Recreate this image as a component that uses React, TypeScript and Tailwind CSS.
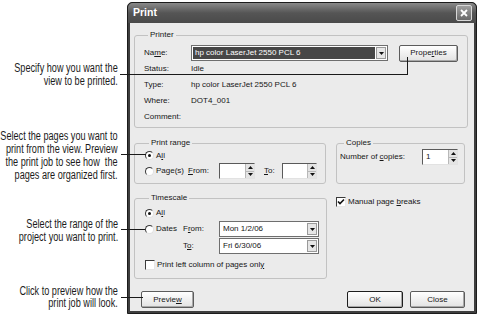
import React from 'react';

const ui = "font-['Liberation_Sans',Arial,sans-serif] text-[8px] text-[#161616]";
const note = "font-['Liberation_Sans',Arial,sans-serif] text-[12.5px] leading-[12.7px] text-[#1b1b1b] text-right whitespace-nowrap origin-right scale-x-[0.73]";

function Tri({ up }: { up?: boolean }) {
  return (
    <svg width="5" height="3" viewBox="0 0 5 3">
      <path d={up ? 'M0 3 L2.5 0 L5 3 Z' : 'M0 0 L5 0 L2.5 3 Z'} fill="#111" />
    </svg>
  );
}

function Radio({ checked }: { checked?: boolean }) {
  return (
    <span className="w-[9px] h-[9px] shrink-0 rounded-full border border-t-[#3a3a3a] border-l-[#3a3a3a] border-r-[#e0e0e0] border-b-[#e0e0e0] bg-white flex items-center justify-center">
      {checked && <span className="w-[3px] h-[3px] rounded-full bg-[#111]" />}
    </span>
  );
}

function Check({ checked }: { checked?: boolean }) {
  return (
    <span className="w-[10px] h-[10px] shrink-0 border border-t-[#3a3a3a] border-l-[#3a3a3a] border-r-[#e6e6e6] border-b-[#e6e6e6] bg-white flex items-center justify-center">
      {checked && (
        <svg width="8" height="8" viewBox="0 0 8 8">
          <path d="M1 3.5 L3 5.5 L7 1.5" stroke="#111" strokeWidth="1.6" fill="none" />
        </svg>
      )}
    </span>
  );
}

function Spin({ w, value }: { w: string; value?: string }) {
  return (
    <div className={`${w} h-[16px] flex border border-t-[#5a5a5a] border-l-[#5a5a5a] border-r-[#e2e2e2] border-b-[#e2e2e2] bg-white`}>
      <span className="flex-1 px-[3px] leading-[14px]">{value}</span>
      <span className="w-[9px] flex flex-col bg-[#e4e4e4] border-l border-[#b8b8b8]">
        <span className="flex-1 flex items-center justify-center border-b border-[#b8b8b8]"><Tri up /></span>
        <span className="flex-1 flex items-center justify-center"><Tri /></span>
      </span>
    </div>
  );
}

function Combo({ w, value, selected }: { w: string; value: string; selected?: boolean }) {
  return (
    <div className={`${w} h-[16px] flex border border-[#6e6e6e] bg-white p-[1px]`}>
      <span className={selected ? 'flex-1 bg-[#474747] text-white px-[2px] leading-[12px] whitespace-nowrap' : 'flex-1 px-[2px] leading-[12px] whitespace-nowrap'}>{value}</span>
      <span className="w-[10px] ml-[1px] bg-[#e6e6e6] border border-[#9a9a9a] flex items-center justify-center"><Tri /></span>
    </div>
  );
}

function Btn({ w, def, children }: { w: string; def?: boolean; children: React.ReactNode }) {
  return (
    <div className={`${w} h-[17px] flex items-center justify-center rounded-[2px] border ${def ? 'border-[#1e1e1e]' : 'border-[#5c5c5c]'} bg-gradient-to-b from-white to-[#e2e2e2] shadow-[inset_-1px_-1px_0_#a8a8a8]`}>
      {children}
    </div>
  );
}

function Group({ label, className, children }: { label: string; className: string; children: React.ReactNode }) {
  return (
    <fieldset className={`border border-[#c2c2c2] rounded-[3px] min-w-0 ${className}`}>
      <legend className="ml-[4px] px-[2px] leading-[12px]">{label}</legend>
      {children}
    </fieldset>
  );
}

export default function App() {
  return (
    <div className="relative w-[477px] h-[316px] bg-white flex overflow-hidden">
      {/* callouts */}
      <div className="w-[127px] pr-[9px] flex flex-col items-end">
        <p className={`mt-[62px] ${note}`}>Specify how you want the<br />view to be printed.</p>
        <p className={`mt-[43px] ${note}`}>Select the pages you want to<br />print from the view. Preview<br />the print job to see how&nbsp; the<br />pages are organized first.</p>
        <p className={`mt-[37px] ${note}`}>Select the range of the<br />project you want to print.</p>
        <p className={`mt-[41px] ${note}`}>Click to preview how the<br />print job will look.</p>
      </div>

      {/* dialog */}
      <div className={`mt-[2px] w-[350px] h-[312px] flex flex-col rounded-t-[5px] bg-[#3e3e3e] border border-[#1c1c1c] ${ui}`}>
        <div className="h-[20px] flex items-center justify-between px-[4px] rounded-t-[5px] bg-gradient-to-b from-[#8a8a8a] via-[#555] to-[#4a4a4a]">
          <span className="ml-[1px] text-white font-bold text-[10.5px]">Print</span>
          <span className="w-[16px] h-[16px] rounded-[2px] border border-[#d8d8d8] bg-gradient-to-b from-[#a0a0a0] to-[#6a6a6a] flex items-center justify-center">
            <svg width="8" height="8" viewBox="0 0 8 8">
              <path d="M1 1 L7 7 M7 1 L1 7" stroke="#fff" strokeWidth="1.8" />
            </svg>
          </span>
        </div>

        <div className="flex-1 mx-[2px] mb-[2px] bg-[#ebebeb] pl-[4px] pr-[6px] pt-[6px] flex flex-col">
          <Group label="Printer" className="h-[99px] pl-[9px] pt-[4px]">
            <div className="h-[16px] flex items-center">
              <span className="w-[47px]">Na<u>m</u>e:</span>
              <Combo w="w-[197px]" value="hp color LaserJet 2550 PCL 6" selected />
              <div className="ml-[11px]">
                <Btn w="w-[59px]">Prope<u>r</u>ties</Btn>
              </div>
            </div>
            <div className="h-[16px] flex items-center"><span className="w-[47px]">Status:</span>Idle</div>
            <div className="h-[16px] flex items-center"><span className="w-[47px]">Type:</span>hp color LaserJet 2550 PCL 6</div>
            <div className="h-[16px] flex items-center"><span className="w-[47px]">Where:</span>DOT4_001</div>
            <div className="h-[16px] flex items-center"><span className="w-[47px]">Comment:</span></div>
          </Group>

          <div className="mt-[9px] flex">
            <Group label="Print range" className="w-[192px] h-[47px] pl-[10px]">
              <div className="h-[13px] flex items-center gap-[2px]"><Radio checked /><span>A<u>l</u>l</span></div>
              <div className="h-[18px] flex items-center">
                <span className="w-[43px] flex items-center gap-[2px]"><Radio /><span>Page(s)</span></span>
                <span className="w-[31px]"><u>F</u>rom:</span>
                <Spin w="w-[36px]" />
                <span className="ml-[9px] w-[18px]"><u>T</u>o:</span>
                <Spin w="w-[35px]" />
              </div>
            </Group>
            <Group label="Copies" className="ml-[10px] w-[129px] h-[47px] pl-[3px]">
              <div className="h-[16px] flex items-center">
                <span className="w-[82px]">Number of <u>c</u>opies:</span>
                <Spin w="w-[36px]" value="1" />
              </div>
            </Group>
          </div>

          <div className="mt-[8px] flex">
            <Group label="Timescale" className="w-[193px] h-[87px] pl-[10px]">
              <div className="mt-[2px] h-[14px] flex items-center gap-[2px]"><Radio checked /><span>A<u>l</u>l</span></div>
              <div className="h-[18px] flex items-center">
                <span className="w-[38px] flex items-center gap-[2px]"><Radio /><span>Dates</span></span>
                <span className="w-[36px]">F<u>r</u>om:</span>
                <Combo w="w-[100px]" value="Mon 1/2/06" />
              </div>
              <div className="h-[16px] flex items-center">
                <span className="w-[38px]" />
                <span className="w-[36px]">T<u>o</u>:</span>
                <Combo w="w-[100px]" value="Fri 6/30/06" />
              </div>
              <div className="mt-[4px] h-[14px] flex items-center gap-[2px]">
                <Check /><span>Print left column of pages onl<u>y</u></span>
              </div>
            </Group>
            <div className="ml-[9px] mt-[4px] h-[12px] flex items-center gap-[2px]">
              <Check checked /><span>Manual page <u>b</u>reaks</span>
            </div>
          </div>

          <div className="mt-[12px] flex items-center pl-[7px] pr-[3px]">
            <Btn w="w-[53px]">Previe<u>w</u></Btn>
            <div className="flex-1" />
            <Btn w="w-[56px]" def>OK</Btn>
            <div className="ml-[7px]"><Btn w="w-[55px]">Close</Btn></div>
          </div>
        </div>
      </div>

      {/* leader lines over the dialog */}
      <div className="absolute left-[120px] top-[74px] w-[288px] h-px bg-[#1a1a1a]" />
      <div className="absolute left-[407px] top-[57px] w-px h-[18px] bg-[#1a1a1a]" />
      <div className="absolute left-[121px] top-[154px] w-[25px] h-px bg-[#1a1a1a]" />
      <div className="absolute left-[121px] top-[229px] w-[24px] h-px bg-[#1a1a1a]" />
      <div className="absolute left-[121px] top-[297px] w-[22px] h-px bg-[#1a1a1a]" />
    </div>
  );
}
